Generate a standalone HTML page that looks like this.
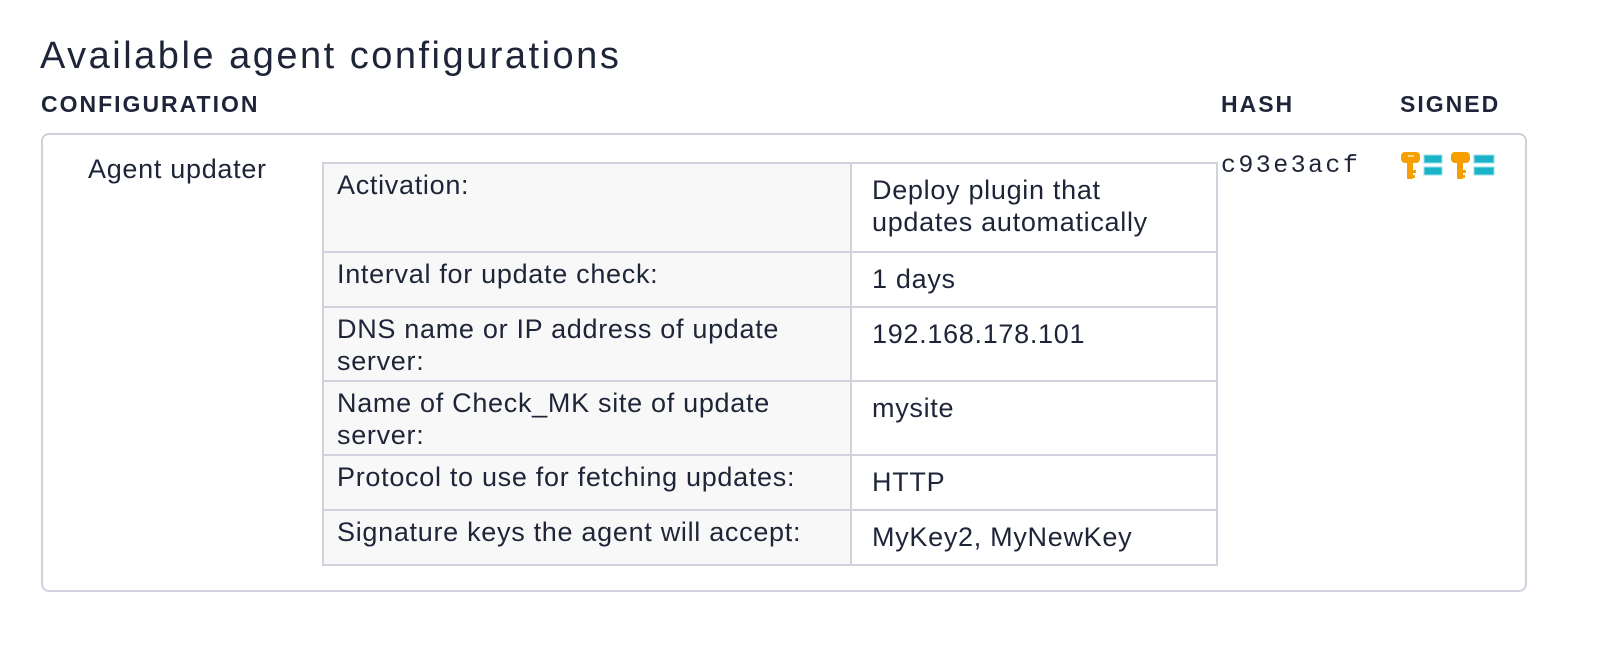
<!DOCTYPE html>
<html><head><meta charset="utf-8"><style>
body{margin:0;width:1617px;height:654px;background:#fff;font-family:"Liberation Sans",sans-serif;color:#1e2538;position:relative;overflow:hidden}
.a{position:absolute;white-space:nowrap}
h1{position:absolute;left:40px;top:35px;margin:0;font-weight:normal;font-size:38px;letter-spacing:2.5px}
.th{position:absolute;top:91px;font-weight:bold;font-size:23px;letter-spacing:2px}
.box{position:absolute;left:41px;top:133px;width:1482px;height:455px;border:2px solid #d0d2de;border-radius:8px}
table{position:absolute;left:322px;top:162px;border-collapse:collapse;font-size:27px;letter-spacing:0.7px}
td{border:2px solid #d0d2de;vertical-align:top;line-height:32px;padding:0}
td.l{background:#f8f8f8;width:501px;padding:5px 12px 0 13px}
td.r{width:332px;padding:10px 12px 0 20px}
.mono{font-family:"Liberation Mono",monospace;font-size:25px}
</style></head><body>
<h1>Available agent configurations</h1>
<div class="th" style="left:41px">CONFIGURATION</div>
<div class="th" style="left:1221px">HASH</div>
<div class="th" style="left:1400px">SIGNED</div>
<div class="box"></div>
<div class="a" style="left:88px;top:154px;font-size:27px;letter-spacing:0.7px">Agent updater</div>
<div class="a mono" style="left:1221px;top:151px;letter-spacing:2.4px">c93e3acf</div>
<svg class="a" style="left:1400px;top:150px" width="100" height="32" viewBox="0 0 100 32">
<g fill="#f5a000"><rect x="1" y="2" width="19" height="11" rx="4"/><rect x="7" y="12" width="6" height="17" rx="1"/><rect x="12" y="20" width="4" height="3"/><rect x="12" y="25" width="3" height="3"/></g>
<rect x="8" y="5" width="6" height="2" fill="#fff" opacity=".6"/>
<g fill="#1ab3c8" stroke="#9be0ea" stroke-width="1"><rect x="24" y="5" width="18" height="8"/><rect x="24" y="17" width="18" height="8"/></g>
<g fill="#f5a000" transform="translate(50,0)"><rect x="1" y="2" width="19" height="11" rx="4"/><rect x="7" y="12" width="6" height="17" rx="1"/><rect x="12" y="20" width="4" height="3"/><rect x="12" y="25" width="3" height="3"/></g>
<g fill="#1ab3c8" stroke="#9be0ea" stroke-width="1"><rect x="74" y="5" width="20" height="8"/><rect x="74" y="17" width="20" height="8"/></g>
</svg>
<table>
<tr style="height:89px"><td class="l">Activation:</td><td class="r">Deploy plugin that<br>updates automatically</td></tr>
<tr style="height:55px"><td class="l">Interval for update check:</td><td class="r">1 days</td></tr>
<tr style="height:74px"><td class="l">DNS name or IP address of update<br>server:</td><td class="r">192.168.178.101</td></tr>
<tr style="height:74px"><td class="l">Name of Check_MK site of update<br>server:</td><td class="r">mysite</td></tr>
<tr style="height:55px"><td class="l">Protocol to use for fetching updates:</td><td class="r">HTTP</td></tr>
<tr style="height:55px"><td class="l">Signature keys the agent will accept:</td><td class="r">MyKey2, MyNewKey</td></tr>
</table>
</body></html>
